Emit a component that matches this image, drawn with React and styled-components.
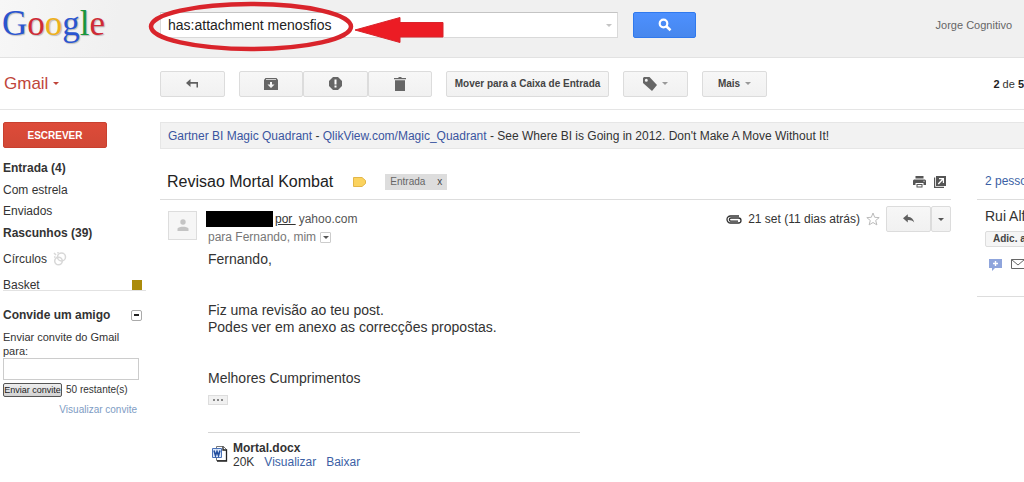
import React from 'react';
import styled, { createGlobalStyle } from 'styled-components';

const GlobalStyle = createGlobalStyle`
  * { box-sizing: border-box; }
  body {
    margin: 0;
    background: #fff;
    color: #333;
    font: 12px/16px "Liberation Sans", Arial, sans-serif;
    overflow-x: hidden;
  }
  button, input { font-family: inherit; margin: 0; }
  h1, h2, p, ul { margin: 0; padding: 0; font-weight: normal; }
  a { text-decoration: none; }
  svg { display: block; flex: none; }
`;

const Header = styled.header`
  display: flex;
  align-items: flex-start;
  height: 58px;
  padding: 12px 12px 0 0;
  background: linear-gradient(100deg, #f7f7f7, #f0f0f0 120px);
  border-bottom: 1px solid #e2e2e2;
`;

const LogoCell = styled.div`
  flex: none;
  width: 160px;
  padding-left: 2px;
`;

const Logo = styled.a`
  display: block;
  margin-top: -6px;
  font: 35px/36px "Liberation Serif", "Times New Roman", serif;
  text-shadow: 1px 1px 1px #bbb;
`;

const Letter = styled.span`
  color: ${(p) => p.$color};
`;

const Search = styled.form`
  position: relative;
  display: flex;
  flex: 0 1 536px;
  gap: 15px;
`;

const SearchField = styled.div`
  display: flex;
  align-items: center;
  flex: 1;
  height: 26px;
  padding-right: 5px;
  background: #fff;
  border: 1px solid #d9d9d9;
  border-top-color: #c4c4c4;
`;

const SearchInput = styled.input`
  flex: 1;
  min-width: 0;
  height: 24px;
  padding: 0 7px;
  border: 0;
  background: none;
  outline: none;
  color: #222;
  font-size: 14px;
`;

const SearchButton = styled.button`
  display: flex;
  align-items: center;
  justify-content: center;
  width: 63px;
  height: 26px;
  padding: 0;
  background: linear-gradient(#4d90fe, #4787ed);
  border: 1px solid #3079ed;
  border-radius: 2px;
`;

const Annotation = styled.svg`
  position: absolute;
  left: -16px;
  top: -12px;
  pointer-events: none;
`;

const UserName = styled.span`
  margin: 5px 0 0 auto;
  color: #666;
  font-size: 11px;
  white-space: nowrap;
`;

const Toolbar = styled.div`
  display: flex;
  align-items: center;
  height: 52px;
  border-bottom: 1px solid #e5e5e5;
  overflow: hidden;
`;

const Brand = styled.button`
  display: flex;
  align-items: center;
  gap: 5px;
  width: 160px;
  padding: 0 0 0 4px;
  border: 0;
  background: none;
  color: #c0453a;
  font-size: 17px;
`;

const Actions = styled.div`
  display: flex;
  gap: 14px;
`;

const Group = styled.div`
  display: flex;
`;

const ToolButton = styled.button`
  display: flex;
  align-items: center;
  justify-content: center;
  gap: 5px;
  min-width: ${(p) => p.$width || 65}px;
  height: 26px;
  padding: 0 7px;
  background: linear-gradient(#f7f7f7, #f1f1f1);
  border: 1px solid #dcdcdc;
  border-radius: 2px;
  color: #444;
  font-size: 10px;
  font-weight: bold;
  white-space: nowrap;
  ${Group} > & + & { margin-left: -1px; }
`;

const Caret = styled.span`
  width: 0;
  height: 0;
  border: ${(p) => p.$size || 4}px solid transparent;
  border-bottom: 0;
  border-top-color: ${(p) => p.$color || '#999'};
`;

const Count = styled.span`
  margin-left: auto;
  font-size: 11px;
  white-space: nowrap;
  b { color: #222; }
`;

const Page = styled.div`
  display: flex;
  padding-top: 12px;
`;

const Sidebar = styled.aside`
  flex: none;
  width: 160px;
  padding-left: 3px;
`;

const Compose = styled.button`
  display: block;
  width: 104px;
  height: 26px;
  margin-bottom: 9px;
  padding: 0;
  background: linear-gradient(#dd4b39, #d14836);
  border: 1px solid #c8402f;
  border-radius: 2px;
  color: #fff;
  font-size: 10px;
  font-weight: bold;
`;

const NavList = styled.ul`
  list-style: none;
`;

const NavItem = styled.li`
  display: flex;
  align-items: center;
  gap: 6px;
  height: ${(p) => p.$height || 22}px;
  a {
    color: #333;
    font-weight: ${(p) => (p.$bold ? 'bold' : 'normal')};
  }
`;

const BasketRow = styled(NavItem)`
  justify-content: space-between;
  align-items: flex-end;
  width: 143px;
  height: 16px;
  padding-right: 4px;
  border-bottom: 1px solid #e2e2e2;
  line-height: 10px;
`;

const Swatch = styled.span`
  width: 10px;
  height: 10px;
  background: #ab8b0b;
`;

const Invite = styled.form`
  width: 139px;
  padding-top: 16px;
`;

const InviteHead = styled.div`
  display: flex;
  justify-content: space-between;
  align-items: center;
  margin-bottom: 7px;
  h2 { font-size: 12px; font-weight: bold; }
`;

const Toggle = styled.button`
  display: flex;
  align-items: center;
  justify-content: center;
  width: 11px;
  height: 11px;
  padding: 0;
  background: #fff;
  border: 1px solid #aaa;
  border-radius: 2px;
`;

const Minus = styled.span`
  width: 5px;
  height: 2px;
  background: #222;
`;

const InviteLabel = styled.label`
  display: block;
  font-size: 11px;
  line-height: 14px;
`;

const InviteInput = styled.input`
  display: block;
  width: 136px;
  height: 22px;
  border: 1px solid #ccc;
`;

const InviteFoot = styled.div`
  display: flex;
  align-items: center;
  gap: 4px;
  padding-top: 2px;
  font-size: 10px;
  white-space: nowrap;
`;

const InviteButton = styled.button`
  width: 59px;
  height: 14px;
  padding: 0;
  background: linear-gradient(#eee, #d2d2d2);
  border: 1px solid #555;
  border-radius: 2px;
  color: #222;
  font-size: 9px;
  line-height: 10px;
  white-space: nowrap;
`;

const InviteLink = styled.a`
  display: block;
  width: 134px;
  margin-top: 4px;
  color: #7e9cc4;
  font-size: 10px;
  text-align: right;
`;

const Main = styled.main`
  flex: 1;
  min-width: 0;
`;

const Ad = styled.p`
  height: 27px;
  padding: 0 7px;
  background: #f2f2f2;
  border: 1px solid #e6e6e6;
  border-right: 0;
  line-height: 26px;
  white-space: nowrap;
  overflow: hidden;
  a { color: #3a55a0; }
`;

const Columns = styled.div`
  display: flex;
  gap: 26px;
`;

const Thread = styled.section`
  flex: 1;
  min-width: 0;
`;

const Subject = styled.div`
  display: flex;
  align-items: center;
  height: 51px;
  padding: 15px 5px 0 7px;
  border-bottom: 1px solid #ddd;
  h1 { margin-right: 20px; color: #222; font-size: 16px; line-height: 20px; }
`;

const Label = styled.span`
  display: flex;
  align-items: center;
  gap: 12px;
  height: 16px;
  margin-left: 19px;
  padding: 0 5px;
  background: #ddd;
  color: #666;
  font-size: 10px;
  button { padding: 0; border: 0; background: none; color: #444; font-size: 10px; }
`;

const SubjectIcons = styled.div`
  display: flex;
  gap: 8px;
  margin-left: auto;
`;

const Message = styled.article`
  display: flex;
  padding: 7px 0 0 8px;
`;

const Avatar = styled.div`
  display: flex;
  align-items: center;
  justify-content: center;
  flex: none;
  width: 29px;
  height: 29px;
  margin: 4px 11px 0 0;
  background: #f6f6f6;
  border: 1px solid #ddd;
`;

const MessageBody = styled.div`
  flex: 1;
  min-width: 0;
`;

const MessageTop = styled.div`
  display: flex;
  justify-content: space-between;
  height: 43px;
`;

const Sender = styled.div`
  padding-top: 4px;
`;

const SenderLine = styled.div`
  display: flex;
  align-items: center;
  margin-left: -2px;
  color: #555;
  u { margin: 0 3px 0 2px; color: #333; white-space: pre; }
`;

const Redacted = styled.span`
  width: 67px;
  height: 16px;
  background: #000;
`;

const Recipients = styled.div`
  display: flex;
  align-items: center;
  gap: 4px;
  padding-top: 2px;
  color: #777;
`;

const DetailsButton = styled.button`
  display: flex;
  align-items: center;
  justify-content: center;
  width: 11px;
  height: 11px;
  padding: 0;
  background: #fff;
  border: 1px solid #ccc;
  border-radius: 1px;
`;

const Meta = styled.div`
  display: flex;
  align-items: center;
  gap: 6px;
  height: 24px;
`;

const Reply = styled(Group)`
  ${ToolButton} { padding: 0; }
`;

const Text = styled.div`
  padding-top: 1px;
  font-size: 14px;
  line-height: 17px;
  white-space: pre-line;
`;

const Ellipsis = styled.button`
  display: flex;
  align-items: center;
  justify-content: center;
  gap: 2px;
  width: 20px;
  height: 10px;
  margin: 8px 0 27px;
  padding: 0;
  background: #f1f1f1;
  border: 1px solid #ddd;
`;

const Dot = styled.span`
  width: 2px;
  height: 2px;
  background: #888;
`;

const Attachment = styled.div`
  display: flex;
  gap: 5px;
  width: 372px;
  max-width: 100%;
  padding: 8px 0 0 4px;
  border-top: 1px solid #d5d5d5;
  line-height: 14px;
  a { margin-left: 10px; color: #3b5fa5; }
  svg { margin-top: 5px; }
`;

const People = styled.aside`
  flex: none;
  width: 47px;
  height: 148px;
  border-bottom: 1px solid #ddd;
  overflow: hidden;
  white-space: nowrap;
`;

const PeopleHead = styled.div`
  height: 51px;
  padding: 24px 0 0 8px;
  border-bottom: 1px solid #ddd;
  a { color: #3b5fa5; }
`;

const Person = styled.div`
  padding: 8px 0 0 8px;
  h2 { font-size: 14px; }
`;

const AddButton = styled.button`
  height: 16px;
  margin: 7px 0 12px;
  padding: 0 7px;
  background: #f5f5f5;
  border: 1px solid #ddd;
  border-radius: 2px;
  color: #444;
  font-size: 10px;
  font-weight: bold;
  line-height: 14px;
`;

const PersonIcons = styled.div`
  display: flex;
  gap: 9px;
  padding-left: 4px;
`;

const LOGO = [
  ['G', '#2a55d0'],
  ['o', '#cf2b36'],
  ['o', '#eeb01c'],
  ['g', '#2a55d0'],
  ['l', '#17963c'],
  ['e', '#cf2b36'],
];

const ReplyArrow = () => (
  <svg width="12" height="10" viewBox="0 0 15 12" fill="#606060">
    <path d="M6 0v3.200c4.500.2 7.200 3 8 7.300-2-2.500-4.500-3.300-8-3.200v3.200L0 5.200z" />
  </svg>
);

export default function App() {
  return (
    <>
      <GlobalStyle />
      <Header>
        <LogoCell>
          <Logo href="#" aria-label="Google">
            {LOGO.map(([c, color], i) => (
              <Letter key={i} $color={color}>{c}</Letter>
            ))}
          </Logo>
        </LogoCell>
        <Search onSubmit={(e) => e.preventDefault()}>
          <SearchField>
            <SearchInput aria-label="Pesquisar" defaultValue="has:attachment menosfios" />
            <Caret $size={3} $color="#c4c4c4" />
          </SearchField>
          <SearchButton aria-label="Pesquisar">
            <svg width="14" height="14" viewBox="0 0 14 14" fill="none" stroke="#fff">
              <circle cx="5.500" cy="5.500" r="3.800" strokeWidth="2.200" />
              <path d="M8.300 8.300l4.200 4" strokeWidth="2.600" />
            </svg>
          </SearchButton>
          <Annotation width="310" height="56" viewBox="0 0 310 56">
            <ellipse cx="107" cy="26.500" rx="100" ry="22.500" fill="none" stroke="#d9242b" strokeWidth="4.500" />
            <path d="M211 30l45-12.500v5h43v14.500h-43v5.500z" fill="#ec1c24" stroke="#d9242b" />
          </Annotation>
        </Search>
        <UserName>Jorge Cognitivo</UserName>
      </Header>

      <Toolbar>
        <Brand>Gmail <Caret $size={3} $color="#c0453a" /></Brand>
        <Actions>
          <ToolButton aria-label="Voltar">
            <svg width="13" height="10" viewBox="0 0 13 10" fill="#606060">
              <path d="M4.500 0v3H12v5.500h-1.500V4.700h-6V8L0 4z" />
            </svg>
          </ToolButton>
          <Group>
            <ToolButton $width={64} aria-label="Arquivar">
              <svg width="14" height="12" viewBox="0 0 14 12" fill="#666">
                <path fillRule="evenodd" d="M1.500 0h11L14 2v10H0V2zM2 1.200h10v.8H2zM6 4v2.500H3.500L7 10l3.500-3.500H8V4z" />
              </svg>
            </ToolButton>
            <ToolButton aria-label="Spam">
              <svg width="13" height="13" viewBox="0 0 13 13" fill="#666">
                <path d="M4 0h5l4 4v5l-4 4H4L0 9V4z" />
                <path d="M5.500 2.500h2v5h-2zM5.500 8.500h2v2h-2z" fill="#fff" />
              </svg>
            </ToolButton>
            <ToolButton $width={64} aria-label="Excluir">
              <svg width="12" height="14" viewBox="0 0 12 14" fill="#666">
                <path d="M0 1h4l1-1h2l1 1h4v1.300H0zM1 3.300h10V14H1z" />
              </svg>
            </ToolButton>
          </Group>
          <ToolButton $width={163}>Mover para a Caixa de Entrada</ToolButton>
          <ToolButton aria-label="Marcadores">
            <svg width="14" height="14" viewBox="0 0 14 14" fill="#666">
              <path fillRule="evenodd" d="M1 0h5.500L14 8l-5 6L0 6V1zM3.300 1.800a1.500 1.500 0 100 3 1.500 1.500 0 000-3z" />
            </svg>
            <Caret $size={3} />
          </ToolButton>
          <ToolButton>Mais <Caret $size={3} /></ToolButton>
        </Actions>
        <Count><b>2</b> de <b>5</b></Count>
      </Toolbar>

      <Page>
        <Sidebar>
          <Compose>ESCREVER</Compose>
          <NavList>
            <NavItem $bold><a href="#">Entrada (4)</a></NavItem>
            <NavItem $height={21}><a href="#">Com estrela</a></NavItem>
            <NavItem><a href="#">Enviados</a></NavItem>
            <NavItem $height={21} $bold><a href="#">Rascunhos (39)</a></NavItem>
            <NavItem $height={32}>
              <a href="#">Círculos</a>
              <svg width="14" height="14" viewBox="0 0 14 14" fill="none" stroke="#d8d8d8" strokeWidth="1.500">
                <circle cx="8.500" cy="5" r="4" />
                <circle cx="5.500" cy="9" r="3.800" />
                <path d="M1 1l2 2M1 5h1.500M5 0v1.500" />
              </svg>
            </NavItem>
          </NavList>
          <BasketRow as="div">
            <a href="#">Basket</a>
            <Swatch />
          </BasketRow>
          <Invite onSubmit={(e) => e.preventDefault()}>
            <InviteHead>
              <h2>Convide um amigo</h2>
              <Toggle type="button" aria-label="Recolher"><Minus /></Toggle>
            </InviteHead>
            <InviteLabel htmlFor="invite">Enviar convite do Gmail para:</InviteLabel>
            <InviteInput id="invite" />
            <InviteFoot>
              <InviteButton>Enviar convite</InviteButton>
              <span>50 restante(s)</span>
            </InviteFoot>
            <InviteLink href="#">Visualizar convite</InviteLink>
          </Invite>
        </Sidebar>

        <Main>
          <Ad>
            <a href="#">Gartner BI Magic Quadrant</a> - <a href="#">QlikView.com/Magic_Quadrant</a> - See Where BI is Going in 2012. Don't Make A Move Without It!
          </Ad>
          <Columns>
            <Thread>
              <Subject>
                <h1>Revisao Mortal Kombat</h1>
                <svg width="13" height="10" viewBox="0 0 13 10">
                  <path d="M.5.5h8.500l3.500 3v3l-3.500 3H.5z" fill="#fbd35f" stroke="#e3b648" />
                </svg>
                <Label>Entrada <button aria-label="Remover marcador">x</button></Label>
                <SubjectIcons>
                  <svg width="13" height="12" viewBox="0 0 13 12" fill="#555">
                    <path fillRule="evenodd" d="M2.500 0h8v2.500h-8zM1 3.500h11l1 1V9h-2.500V7h-8v2H0V4.500zM10.500 4.800v1h1v-1zM3.500 8h6v3.500h-6zM4.500 9v1.500h4V9z" />
                  </svg>
                  <svg width="12" height="12" viewBox="0 0 12 12" fill="#555">
                    <path d="M0 1.500h1.200v9.300H10V12H0z" />
                    <path fillRule="evenodd" d="M2 0h10v10H2zM5 2v1.300h2.800L3.800 7.400l1 1 4-4.100V7H10V2z" />
                  </svg>
                </SubjectIcons>
              </Subject>
              <Message>
                <Avatar>
                  <svg width="12" height="13" viewBox="0 0 12 13" fill="#c4c4c4">
                    <circle cx="6" cy="3" r="2.700" />
                    <path d="M0.500 12V9.500C2 7 10 7 11.500 9.500V12z" />
                  </svg>
                </Avatar>
                <MessageBody>
                  <MessageTop>
                    <Sender>
                      <SenderLine><Redacted /><u>{'por '}</u>yahoo.com</SenderLine>
                      <Recipients>
                        para Fernando, mim
                        <DetailsButton aria-label="Mostrar detalhes"><Caret $size={3} $color="#555" /></DetailsButton>
                      </Recipients>
                    </Sender>
                    <Meta>
                      <svg width="16" height="9" viewBox="0 0 16 9" fill="none" stroke="#333" strokeWidth="1.300">
                        <path d="M12 6.200H5a1.600 1.600 0 010-3.200h7.500a2.400 2.400 0 010 5H4.500a3.500 3.500 0 010-7H13" />
                      </svg>
                      <span>21 set (11 dias atrás)</span>
                      <svg width="14" height="14" viewBox="0 0 14 14" fill="#fff" stroke="#bbb">
                        <path d="M7 1l1.700 4.300 4.500.3-3.500 2.900 1.200 4.400L7 10.500l-3.900 2.400 1.200-4.400L.8 5.600l4.500-.3z" />
                      </svg>
                      <Reply>
                        <ToolButton $width={45} aria-label="Responder"><ReplyArrow /></ToolButton>
                        <ToolButton $width={20} aria-label="Mais opções"><Caret $size={3} $color="#555" /></ToolButton>
                      </Reply>
                    </Meta>
                  </MessageTop>
                  <Text>{`Fernando,


                  Fiz uma revisão ao teu post.
                  Podes ver em anexo as correcções propostas.


                  Melhores Cumprimentos`}</Text>
                  <Ellipsis aria-label="Mostrar conteúdo cortado"><Dot /><Dot /><Dot /></Ellipsis>
                  <Attachment>
                    <svg width="16" height="16" viewBox="0 0 16 16">
                      <path d="M4.500.5h7l3 3v11h-10z" fill="#fff" stroke="#777" />
                      <path d="M11 .5v3.500h3.500V15H5" fill="none" stroke="#222" strokeWidth="1.300" />
                      <path d="M.5 2.500h9v9h-9z" fill="#dce8fa" stroke="#4a72b8" />
                      <path d="M2 4.500l1.500 5L5 5.500l1.500 4L8 4.500" fill="none" stroke="#244f9e" strokeWidth="1.600" />
                    </svg>
                    <div>
                      <b>Mortal.docx</b>
                      <div>20K<a href="#">Visualizar</a><a href="#">Baixar</a></div>
                    </div>
                  </Attachment>
                </MessageBody>
              </Message>
            </Thread>
            <People>
              <PeopleHead><a href="#">2 pesso</a></PeopleHead>
              <Person>
                <h2>Rui Alf</h2>
                <AddButton>Adic. a</AddButton>
                <PersonIcons>
                  <svg width="13" height="12" viewBox="0 0 13 12">
                    <path d="M0 0h13v9H6l-3 3V9H0z" fill="#8fa5dc" />
                    <path d="M6.500 2v5M4 4.500h5" stroke="#fff" strokeWidth="1.400" />
                  </svg>
                  <svg width="14" height="10" viewBox="0 0 14 10" fill="none" stroke="#666">
                    <path d="M.5.5h13v9H.5zM.5.5L7 6l6.500-5.500" />
                  </svg>
                </PersonIcons>
              </Person>
            </People>
          </Columns>
        </Main>
      </Page>
    </>
  );
}
